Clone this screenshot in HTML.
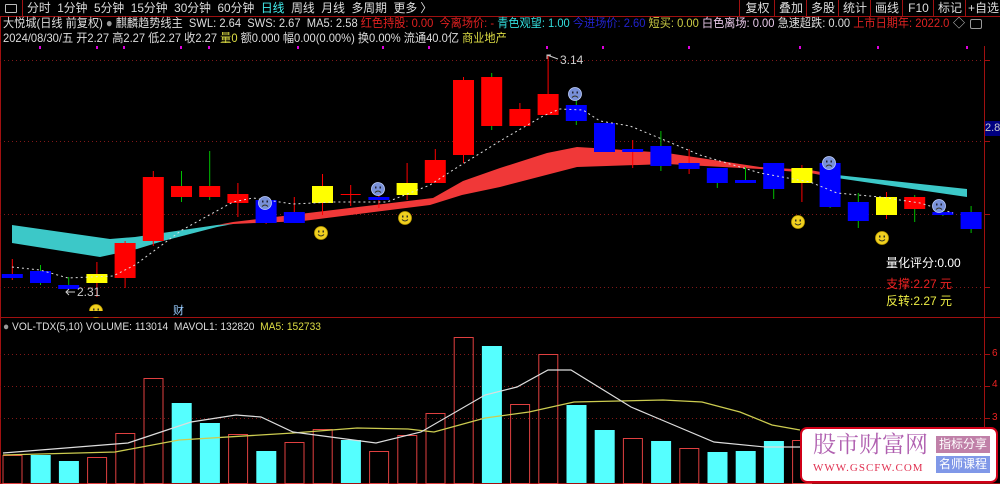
<!DOCTYPE html>
<html><head><meta charset="utf-8">
<style>
html,body{margin:0;padding:0;background:#000;width:1000px;height:484px;overflow:hidden;font-family:"Liberation Sans","Noto Sans CJK SC",sans-serif;}
#c{position:absolute;left:0;top:0}
.t{position:absolute;white-space:nowrap;font-size:12px;line-height:14px}
.sq{transform:scaleX(0.93);transform-origin:0 0}
.tb{position:absolute;top:0;height:16px;font-size:12px;line-height:16px;color:#ddd;white-space:nowrap}
.btn{position:absolute;top:0;height:16px;border-left:1px solid #a01010;font-size:12px;line-height:16px;color:#ddd;text-align:center}
</style></head><body>
<svg id="c" width="1000" height="484" xmlns="http://www.w3.org/2000/svg">
<rect width="1000" height="484" fill="#000"/>
<g id="g"></g>
</svg>
<div style="position:absolute;left:0;top:0;width:22px;height:16px;border-right:1px solid #a01010"></div>
<div style="position:absolute;left:5px;top:4px;width:10px;height:7px;border:1px solid #bbb;border-radius:1px"></div>
<div class="tb sq" style="left:27px;transform:scaleX(0.985)">分时&nbsp;&nbsp;1分钟&nbsp;&nbsp;5分钟&nbsp;&nbsp;15分钟&nbsp;&nbsp;30分钟&nbsp;&nbsp;60分钟&nbsp;&nbsp;<span style="color:#4ee">日线</span>&nbsp;&nbsp;周线&nbsp;&nbsp;月线&nbsp;&nbsp;多周期&nbsp;&nbsp;更多 〉</div>
<div class="btn" style="left:739px;width:35px">复权</div>
<div class="btn" style="left:774px;width:32px">叠加</div>
<div class="btn" style="left:806px;width:32px">多股</div>
<div class="btn" style="left:838px;width:32px">统计</div>
<div class="btn" style="left:870px;width:32px">画线</div>
<div class="btn" style="left:902px;width:31px">F10</div>
<div class="btn" style="left:933px;width:32px">标记</div>
<div class="btn" style="left:965px;width:35px">+自选</div>
<div style="position:absolute;left:0;top:16px;width:965px;height:16px;overflow:hidden">
<div class="t sq" style="left:3px;top:0;color:#ddd">大悦城(日线 前复权) <span style="color:#999">●</span> 麒麟趋势线主&nbsp; SWL: 2.64&nbsp; SWS: 2.67&nbsp; MA5: 2.58 <span style="color:#e02020">红色持股: 0.00&nbsp; 今离场价: -</span> <span style="color:#3dd">青色观望: 1.00</span> <span style="color:#22c">今进场价: 2.60</span> <span style="color:#cc4">短买: 0.00</span> <span style="color:#e8c8e8">白色离场: 0.00</span> 急速超跌: 0.00 <span style="color:#d22">上市日期年: 2022.0</span></div></div>
<div class="t" style="left:953px;top:16px;color:#ccc">◇</div>
<div style="position:absolute;left:970px;top:19px;width:10px;height:8px;border:1px solid #999;border-radius:2px"></div>
<div class="t sq" style="left:3px;top:31px;color:#ddd">2024/08/30/五 开2.27 高2.27 低2.27 收2.27 <span style="color:#dd4">量0</span> 额0.000 幅0.00(0.00%) 换0.00% 流通40.0亿 <span style="color:#dd4">商业地产</span></div>
<div class="t" style="left:77px;top:285px;color:#ccc">2.31</div>
<div class="t" style="left:560px;top:53px;color:#ccc">3.14</div>
<div class="t" style="left:173px;top:304px;color:#9cf;font-size:11px">财</div>
<div class="t" style="left:886px;top:256px;color:#fff">量化评分:0.00</div>
<div class="t" style="left:886px;top:277px;color:#e22">支撑:2.27 元</div>
<div class="t" style="left:886px;top:294px;color:#ee4">反转:2.27 元</div>
<div style="position:absolute;left:985px;top:121px;width:15px;height:15px;background:#000080;color:#ccc;font-size:11px;line-height:15px">2.8</div>
<div class="t sq" style="left:3px;top:320px;color:#ddd;font-size:11px"><span style="color:#999">●</span> VOL-TDX(5,10) VOLUME: 113014&nbsp; MAVOL1: 132820&nbsp; <span style="color:#dd4">MA5: 152733</span></div>
<div class="t" style="left:992px;top:347px;color:#e22;font-size:10px">6</div>
<div class="t" style="left:992px;top:378px;color:#e22;font-size:10px">4</div>
<div class="t" style="left:992px;top:411px;color:#e22;font-size:10px">3</div>
<div style="position:absolute;left:800px;top:427px;width:194px;height:52px;background:#fff;border:2px solid #d00018;border-radius:7px"></div>
<div class="t" style="left:813px;top:430px;font-size:23px;line-height:26px;color:#b060b0;font-family:'Noto Serif CJK SC',serif">股市财富网</div>
<div class="t" style="left:813px;top:461px;font-size:11px;color:#e03050;font-family:'Liberation Serif',serif;letter-spacing:1px">WWW.GSCFW.COM</div>
<div class="t" style="left:936px;top:436px;width:54px;height:17px;line-height:17px;background:#c080a8;color:#fff;text-align:center;font-size:12px">指标分享</div>
<div class="t" style="left:936px;top:456px;width:54px;height:17px;line-height:17px;background:#8098e8;color:#fff;text-align:center;font-size:12px">名师课程</div>
<script>
var g=document.getElementById('g'),NS='http://www.w3.org/2000/svg';
function el(n,a){var e=document.createElementNS(NS,n);for(var k in a)e.setAttribute(k,a[k]);g.appendChild(e);return e;}
el('line',{x1:0,y1:16.5,x2:1000,y2:16.5,stroke:'#a01010'});
el('line',{x1:0.5,y1:16,x2:0.5,y2:484,stroke:'#a01010'});
el('line',{x1:984.5,y1:46,x2:984.5,y2:484,stroke:'#a01010'});
el('line',{x1:0,y1:317.5,x2:1000,y2:317.5,stroke:'#a01010'});
el('line',{x1:0,y1:483.5,x2:1000,y2:483.5,stroke:'#a01010'});
[60,141,214,287,354,386,418].forEach(function(y){el('line',{x1:0,y1:y+.5,x2:984,y2:y+.5,stroke:'#801818','stroke-dasharray':'1,3'});el('line',{x1:984,y1:y+.5,x2:990,y2:y+.5,stroke:'#a01010'});});
[39,96,123,180,208,297,382,428,546,602,688,799,877,966].forEach(function(x){el('rect',{x:x,y:46,width:2,height:3,fill:'#d0d'});});
el('polygon',{points:'12,225 110,239 135,237 217,225 233,224 217,227 163,241 137,249 100,257 12,243',fill:'#3cc8c8'});
el('polygon',{points:'217,225 233,222 433,198 463,181 500,168 547,153 577,147 610,149 667,153 760,167 810,170 837,175 837,178 810,173 760,169 667,164 577,167 500,187 462,195 430,205 303,221 233,224',fill:'#f03838'});
el('polygon',{points:'837,175 967,189 967,197 837,178',fill:'#3cc8c8'});
var R='#ff0000',B='#0000ff',Y='#ffff00',G='#00c000';
var c=[[B,274,278,259,280,R],[B,271,283,265,285,G],[B,285,289,277,289,G],[Y,274,283,262,297,R],[R,243,278,241,288,R],[R,177,241,171,246,R],[R,186,197,171,202,G],[R,186,197,151,200,G],[R,194,203,183,217,R],[B,200,223,198,224,R],[B,212,223,197,223,R],[Y,186,203,174,215,R],[R,194,195,185,206,R],[B,197,200,183,208,R],[Y,183,195,163,200,R],[R,160,183,149,183,R],[R,80,155,77,163,R],[R,77,126,73,130,G],
[R,109,126,103,126,R],[R,94,115,55,115,R],[B,105,121,100,125,G],[B,123,152,123,152,B],[B,149,152,140,168,R],[B,146,166,131,171,G],[B,163,169,149,174,R],[B,168,183,168,188,G],[B,180,183,167,183,G],[B,163,189,163,199,G],[Y,168,183,165,202,R],[B,163,207,163,208,G],[B,202,221,193,228,G],[Y,197,215,192,219,R],[R,197,209,195,222,G],[B,212,215,210,216,G],[B,212,229,206,233,G]];
c.forEach(function(d,i){var x=12.3+28.2*i;el('line',{x1:x,y1:d[3],x2:x,y2:d[4],stroke:d[5]});
 if(i==12){el('line',{x1:x-10,y1:194.5,x2:x+10,y2:194.5,stroke:R});return;}
 el('rect',{x:x-10.5,y:d[1],width:21,height:Math.max(2,d[2]-d[1]),fill:d[0]});});
el('polyline',{points:'12,267 40,270 68,278 113,276 135,265 182,230 233,202 253,198 293,204 333,202 387,202 430,185 453,170 500,141 543,116 560,109 583,110 600,121 630,126 657,137 700,155 760,173 810,182 837,193 880,197 920,203 953,213',fill:'none',stroke:'#ddd','stroke-dasharray':'2,3'});
el('line',{x1:66,y1:292,x2:75,y2:292,stroke:'#ccc'});el('polyline',{points:'69,289 66,292 69,295',fill:'none',stroke:'#ccc'});
el('line',{x1:547,y1:55,x2:558,y2:59,stroke:'#ccc'});el('polyline',{points:'547,59 547,55 551,55',fill:'none',stroke:'#ccc'});
function face(x,y,sad){el('circle',{cx:x,cy:y,r:6.5,fill:sad?'#7890d8':'#f0d020',stroke:sad?'#c0d0ff':'#c0a000','stroke-width':.8});
 el('rect',{x:x-3,y:y-2.5,width:1.5,height:2,fill:sad?'#223':'#332'});el('rect',{x:x+1.5,y:y-2.5,width:1.5,height:2,fill:sad?'#223':'#332'});
 el('path',{d:sad?'M'+(x-3)+','+(y+3.5)+' Q'+x+','+(y+0.5)+' '+(x+3)+','+(y+3.5):'M'+(x-3)+','+(y+1.5)+' Q'+x+','+(y+4.5)+' '+(x+3)+','+(y+1.5),fill:'none',stroke:'#332','stroke-width':1});}
[[265,203],[378,189],[575,94],[829,163],[939,206]].forEach(function(p){face(p[0],p[1],1);});
[[321,233],[405,218],[798,222],[882,238],[96,311]].forEach(function(p){face(p[0],p[1],0);});
el('rect',{x:80,y:311,width:30,height:6,fill:'#000'});
var vb=[[R,455],[1,455],[1,461],[R,457],[R,433],[R,378],[1,403],[1,423],[R,434],[1,451],[R,442],[R,429],[1,440],[R,451],[R,435],[R,413],[R,337],[1,346],[R,404],[R,354],[1,405],[1,430],[R,438],[1,441],[R,448],[1,452],[1,451],[1,441],[R,440]];
vb.forEach(function(d,i){var x=2.5+28.2*i;if(d[0]===1)el('rect',{x:x,y:d[1],width:20,height:483-d[1],fill:'#55ffff'});else el('rect',{x:x+.5,y:d[1]+.5,width:19,height:483-d[1],fill:'none',stroke:'#e04040'});});
el('polyline',{points:'3,455 115,452 179,440 293,433 357,428 408,429 434,432 485,418 529,412 574,402 663,400 702,402 740,412 772,425 800,430',fill:'none',stroke:'#cccc50','stroke-width':1.3});
el('polyline',{points:'3,453 128,443 191,422 236,415 261,417 293,432 376,443 421,432 485,395 517,387 548,370 571,370 631,407 657,418 714,442 765,447 800,447',fill:'none',stroke:'#ddd','stroke-width':1.2});
</script>
</body></html>
